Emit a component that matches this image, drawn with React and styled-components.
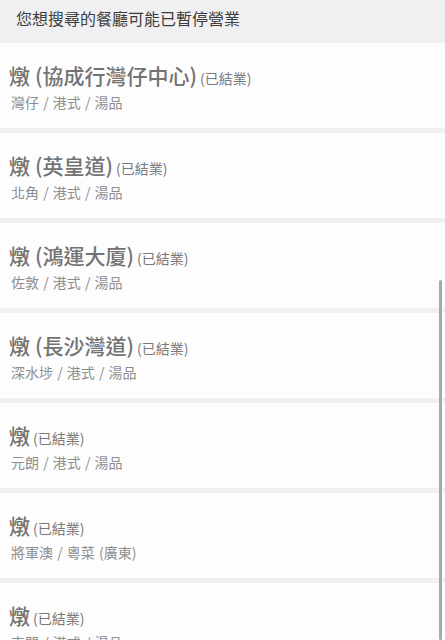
import React from 'react'
import styled, { createGlobalStyle } from 'styled-components'

const GlobalStyle = createGlobalStyle`
    html, body {
        margin: 0;
        padding: 0;
        background: #f0eff2;
        font-family: "Noto Sans CJK TC", "Noto Sans", sans-serif;
    }
`

const restaurants = [
    { branch: '協成行灣仔中心', tags: ['灣仔', '港式', '湯品'] },
    { branch: '英皇道', tags: ['北角', '港式', '湯品'] },
    { branch: '鴻運大廈', tags: ['佐敦', '港式', '湯品'] },
    { branch: '長沙灣道', tags: ['深水埗', '港式', '湯品'] },
    { branch: null, tags: ['元朗', '港式', '湯品'] },
    { branch: null, tags: ['將軍澳', '粵菜 (廣東)'] },
    { branch: null, tags: ['屯門', '港式', '湯品'] },
]

const App = () => {
    return (
        <Page>
            <GlobalStyle />
            <Header>您想搜尋的餐廳可能已暫停營業</Header>
            <List>
                {restaurants.map((r, i) => (
                    <Card key={i}>
                        <Title>
                            燉{r.branch && <Branch>({r.branch})</Branch>}
                            <Closed>(已結業)</Closed>
                        </Title>
                        <Tags>{r.tags.join(' / ')}</Tags>
                    </Card>
                ))}
            </List>
            <ScrollBar />
        </Page>
    )
}

export default App

const Page = styled.div`
    position: relative;
    width: 445px;
    height: 640px;
    overflow: hidden;
    background: #f0eff2;
`

const Header = styled.div`
    height: 43px;
    padding: 0 16px 8px;
    box-sizing: border-box;
    display: flex;
    align-items: center;
    font-size: 16px;
    color: #3c3c3c;
`

const List = styled.div`
    display: flex;
    flex-direction: column;
    gap: 5px;
`

const Card = styled.div`
    height: 85px;
    box-sizing: border-box;
    padding: 20px 9px 0;
    background: #fdfdfe;
`

const Title = styled.div`
    font-size: 21px;
    line-height: 24px;
    color: #737373;
    font-weight: 500;
    white-space: nowrap;
`

const Branch = styled.span`
    margin-left: 5px;
`

const Closed = styled.span`
    margin-left: 3px;
    font-size: 14px;
    font-weight: 400;
    color: #7a7a7a;
`

const Tags = styled.div`
    margin-top: 2px;
    padding-left: 2px;
    font-size: 14px;
    line-height: 20px;
    word-spacing: 1px;
    color: #8e8e8e;
`

const ScrollBar = styled.div`
    position: absolute;
    right: 3px;
    top: 280px;
    width: 3px;
    bottom: 0;
    border-radius: 2px;
    background: #a9a9ab;
`
